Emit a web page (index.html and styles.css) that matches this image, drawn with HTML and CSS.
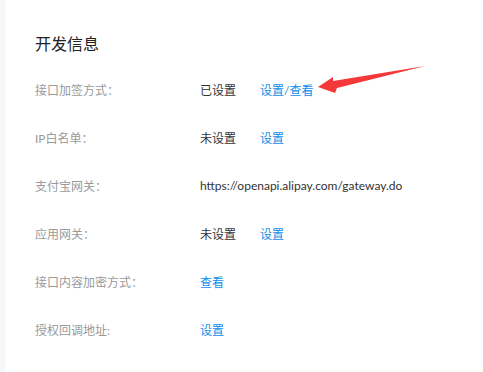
FILE: index.html
```html
<!DOCTYPE html>
<html lang="zh-CN">

<head>
    <meta charset="UTF-8">
    <title>开发信息</title>
    <link rel="stylesheet" href="styles.css">
</head>

<body>
    <div class="panel">
        <h2 class="title">开发信息</h2>
        <div class="info-list">
            <div class="info-row">
                <span class="info-label">接口加签方式：</span>
                <span class="info-value">已设置</span>
                <a class="info-link" href="#">设置/查看</a>
            </div>
            <div class="info-row">
                <span class="info-label">IP白名单：</span>
                <span class="info-value">未设置</span>
                <a class="info-link" href="#">设置</a>
            </div>
            <div class="info-row">
                <span class="info-label">支付宝网关：</span>
                <span class="info-value">https://openapi.alipay.com/gateway.do</span>
            </div>
            <div class="info-row">
                <span class="info-label">应用网关：</span>
                <span class="info-value">未设置</span>
                <a class="info-link" href="#">设置</a>
            </div>
            <div class="info-row">
                <span class="info-label">接口内容加密方式：</span>
                <a class="info-link first" href="#">查看</a>
            </div>
            <div class="info-row">
                <span class="info-label">授权回调地址:</span>
                <a class="info-link first" href="#">设置</a>
            </div>
        </div>

        <!-- red annotation arrow -->
        <svg class="arrow" width="483" height="120" viewBox="0 0 483 120">
            <polygon points="318,87 333,77 333,81 425,66 337,88 335,93" fill="#f5393a" />
        </svg>
    </div>
</body>

</html>
```

FILE: styles.css
```css
body {
    margin: 0;
    padding: 0;
    background-color: #f6f7f9;
    font-family: Lato, "Noto Sans CJK SC", sans-serif;
}

.panel {
    position: relative;
    margin-left: 5px;
    min-height: 372px;
    padding: 32px 0 0 30px;
    background-color: #fff;
    box-sizing: border-box;
}

.title {
    margin: 0;
    font-size: 16px;
    font-weight: normal;
    line-height: 24px;
    color: #222;
}

.info-list {
    margin-top: 9px;
}

.info-row {
    display: flex;
    align-items: center;
    height: 48px;
    font-size: 12px;
}

.info-label {
    width: 165px;
    color: #9a9a9a;
}

.info-value {
    min-width: 60px;
    color: #333;
}

.info-link {
    color: #108ee9;
    text-decoration: none;
}

.arrow {
    position: absolute;
    left: -5px;
    top: 0;
}
```
